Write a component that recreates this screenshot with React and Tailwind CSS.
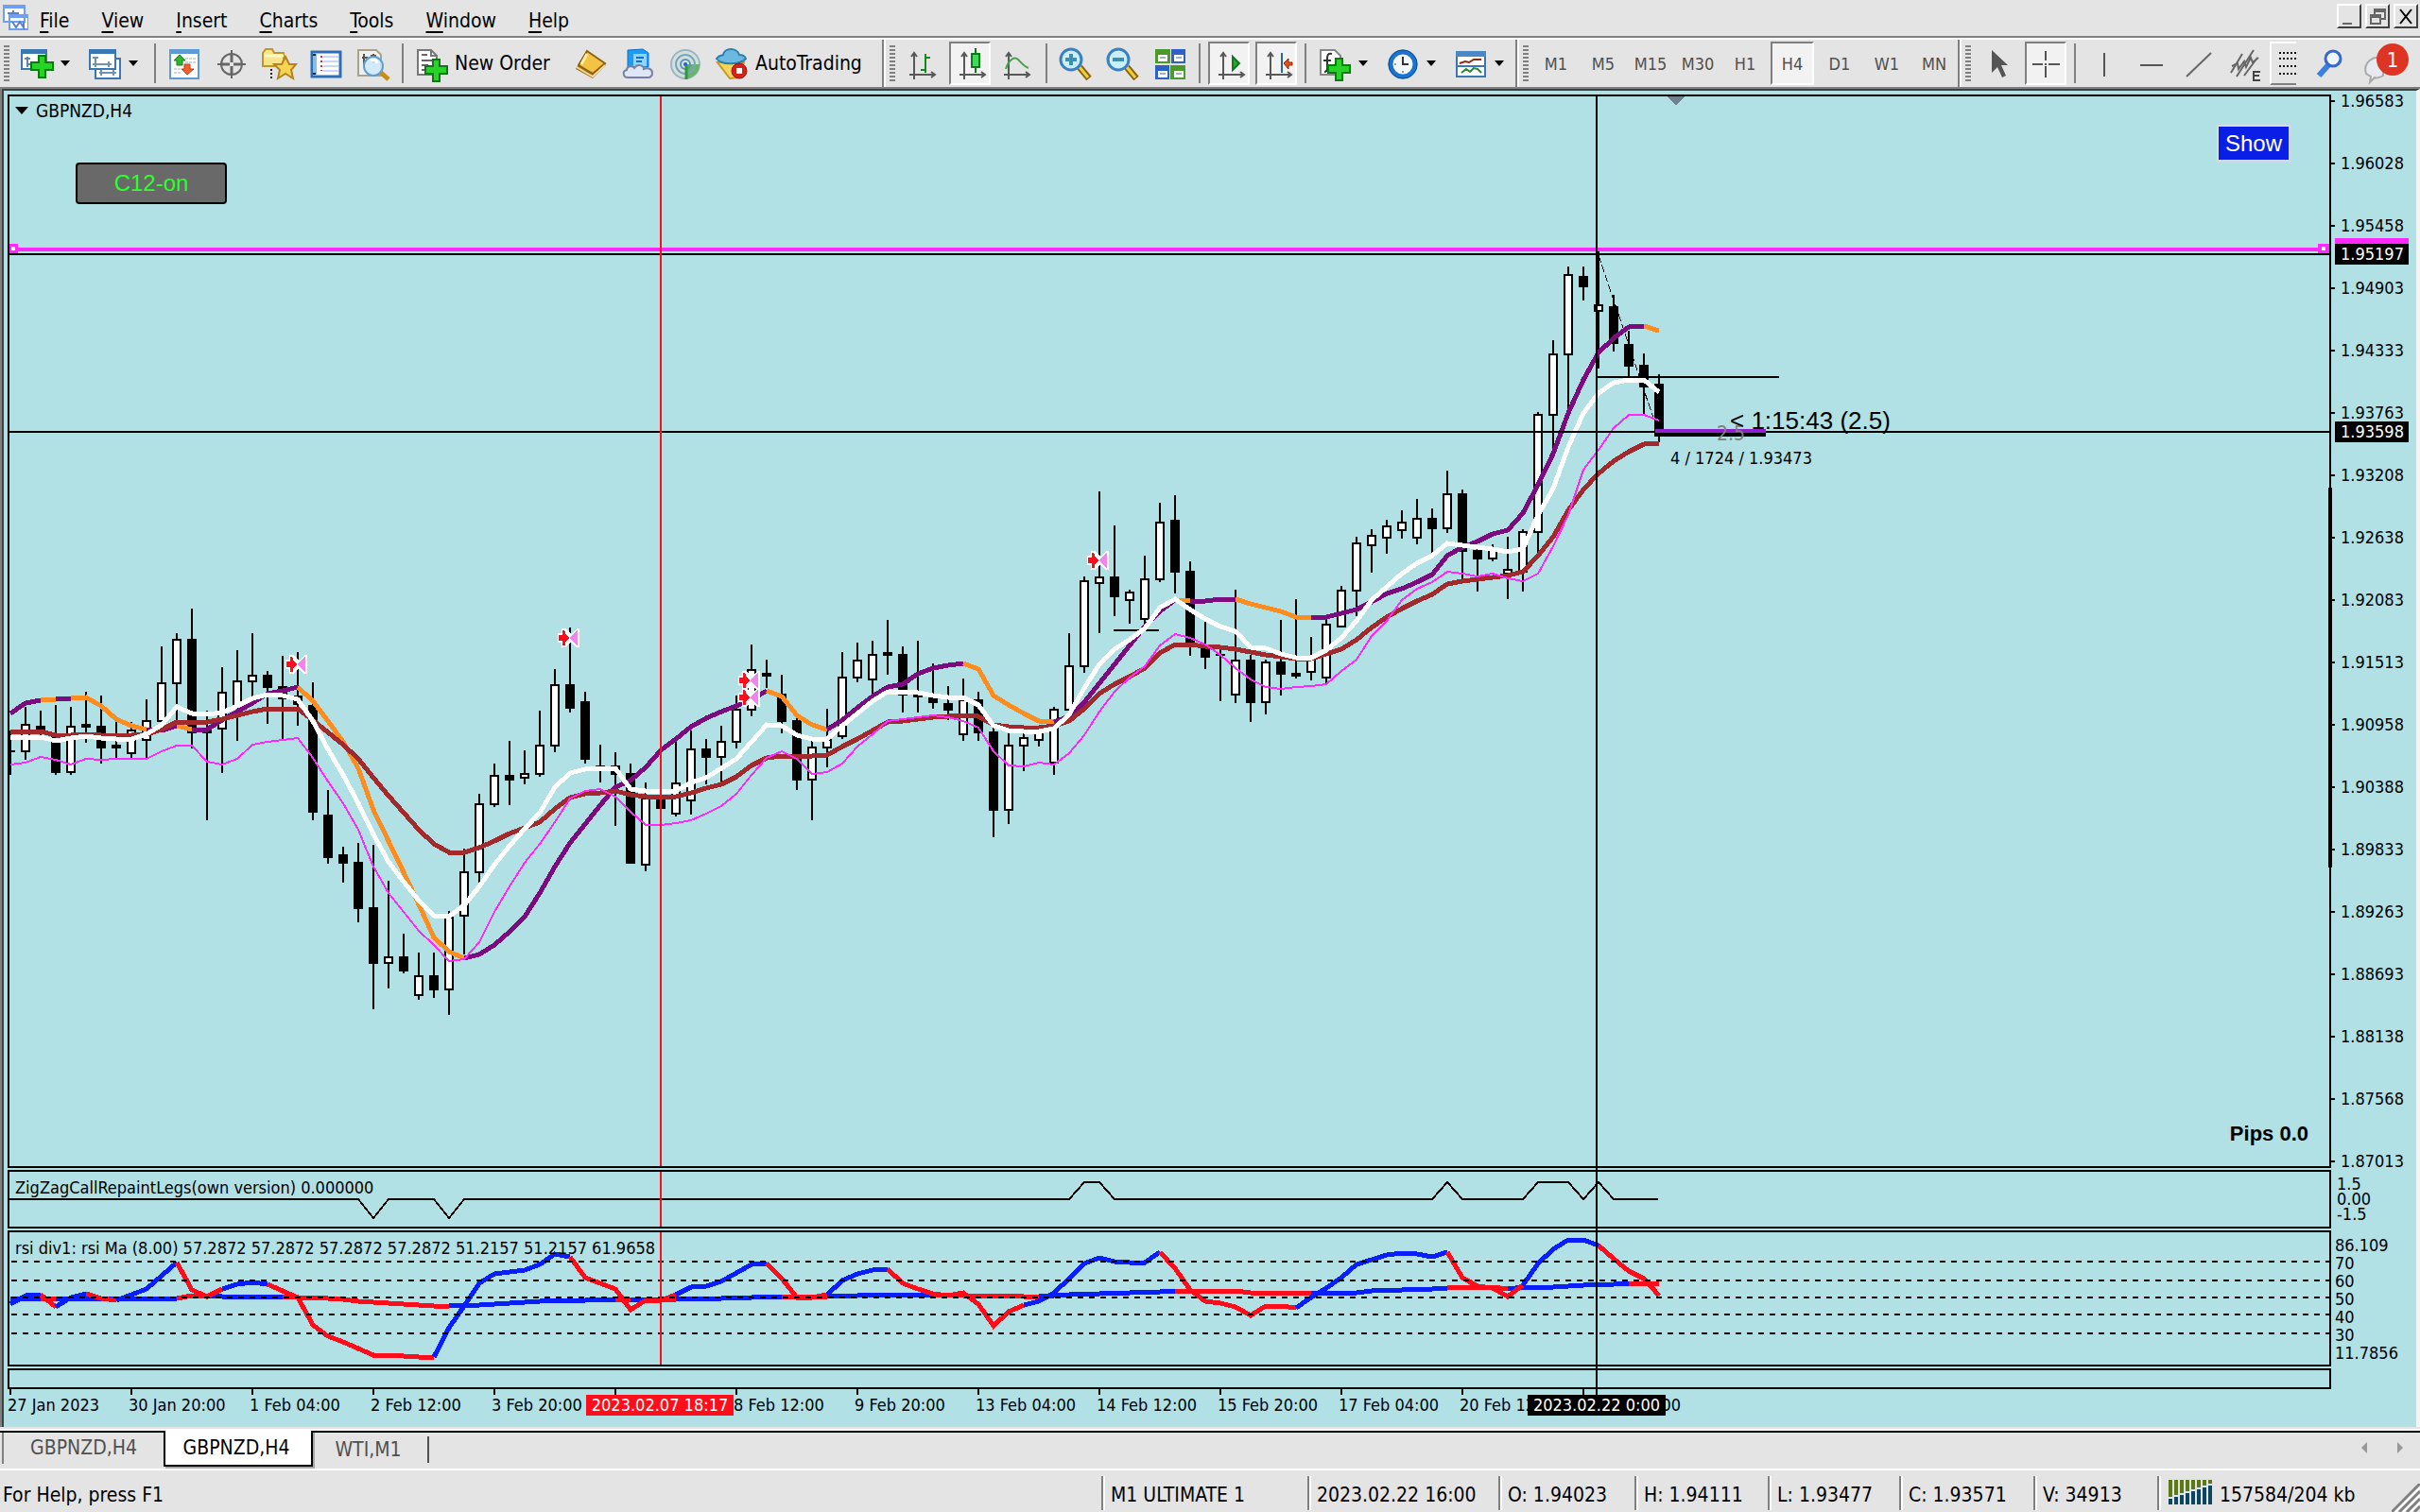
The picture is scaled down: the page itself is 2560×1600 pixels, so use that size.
import React, { useState } from 'react';

const menuItems = ['File', 'View', 'Insert', 'Charts', 'Tools', 'Window', 'Help'];
const timeframes = ['M1', 'M5', 'M15', 'M30', 'H1', 'H4', 'D1', 'W1', 'MN'];
const prices = ['1.96583', '1.96028', '1.95458', '1.94903', '1.94333', '1.93763', '1.93208', '1.92638', '1.92083', '1.91513', '1.90958', '1.90388', '1.89833', '1.89263', '1.88693', '1.88138', '1.87568', '1.87013'];
const dates = ['27 Jan 2023', '30 Jan 20:00', '1 Feb 04:00', '2 Feb 12:00', '3 Feb 20:00', '7 Feb 04:00', '8 Feb 12:00', '9 Feb 20:00', '13 Feb 04:00', '14 Feb 12:00', '15 Feb 20:00', '17 Feb 04:00', '20 Feb 12:00', '21 Feb 20:00'];
const rsiLevels = ['86.109', '70', '60', '50', '40', '30', '11.7856'];

// high, body top, body bottom, low, 1 = bull
const candles = [
  [773, 794, 796, 820, 0], [748, 766, 796, 804, 1], [752, 768, 775, 782, 0], [746, 776, 818, 820, 0], [748, 768, 818, 820, 1],
  [732, 766, 770, 786, 0], [736, 768, 792, 808, 0], [764, 788, 792, 802, 0], [764, 772, 798, 802, 1], [740, 762, 784, 802, 1],
  [684, 722, 764, 770, 1], [670, 676, 724, 764, 1], [644, 676, 776, 792, 0], [752, 772, 776, 868, 0], [706, 732, 772, 818, 1],
  [688, 720, 748, 784, 1], [670, 714, 722, 738, 1], [710, 714, 728, 766, 0], [694, 726, 740, 782, 0], [690, 736, 746, 768, 0],
  [722, 746, 860, 868, 0], [836, 862, 908, 914, 0], [896, 904, 914, 934, 0], [892, 912, 962, 976, 0], [894, 960, 1020, 1068, 0],
  [932, 1012, 1020, 1046, 1], [988, 1012, 1028, 1030, 0], [1008, 1032, 1054, 1058, 1], [1008, 1032, 1048, 1056, 0], [964, 970, 1048, 1074, 1],
  [898, 922, 970, 1010, 1], [840, 850, 924, 934, 1], [808, 820, 852, 854, 1], [784, 820, 826, 852, 0], [794, 818, 824, 830, 1],
  [752, 788, 820, 822, 1], [708, 724, 790, 796, 1], [664, 724, 750, 754, 0], [732, 742, 804, 808, 0], [788, 810, 812, 828, 0],
  [796, 810, 820, 874, 0], [808, 818, 914, 914, 0], [828, 844, 916, 922, 1], [830, 842, 856, 856, 0], [782, 828, 862, 864, 1],
  [773, 792, 848, 862, 1], [782, 792, 802, 830, 0], [768, 784, 802, 828, 1], [736, 750, 786, 792, 1], [682, 708, 752, 758, 1],
  [698, 712, 716, 728, 0], [714, 734, 764, 776, 0], [758, 762, 826, 836, 0], [784, 790, 826, 868, 1], [750, 782, 792, 812, 1],
  [690, 716, 780, 782, 1], [680, 698, 718, 722, 1], [678, 692, 720, 738, 1], [656, 690, 694, 714, 0], [684, 692, 736, 754, 0],
  [678, 735, 738, 754, 0], [702, 737, 744, 750, 0], [726, 744, 752, 762, 0], [718, 740, 778, 784, 1], [732, 740, 776, 784, 0],
  [770, 774, 858, 886, 0], [776, 788, 858, 872, 1], [775, 780, 790, 816, 1], [772, 774, 784, 790, 1], [748, 750, 808, 820, 1],
  [670, 704, 752, 754, 1], [610, 614, 706, 712, 1], [520, 610, 618, 670, 1], [556, 610, 632, 652, 0], [624, 626, 636, 660, 1],
  [588, 612, 656, 660, 1], [532, 552, 614, 616, 1], [524, 550, 606, 628, 0], [594, 604, 682, 694, 0], [658, 684, 696, 708, 0],
  [686, 692, 694, 742, 0], [624, 698, 736, 744, 1], [693, 698, 744, 764, 0], [698, 700, 744, 756, 1], [656, 700, 714, 736, 0],
  [634, 712, 716, 718, 0], [674, 697, 712, 720, 1], [655, 660, 718, 724, 1], [620, 624, 664, 664, 1], [568, 574, 626, 652, 1],
  [560, 566, 578, 606, 1], [550, 556, 570, 586, 1], [540, 552, 562, 570, 1], [528, 548, 570, 576, 1], [538, 548, 560, 586, 0],
  [498, 522, 560, 564, 1], [518, 522, 584, 614, 0], [577, 582, 592, 626, 0], [576, 581, 592, 594, 1], [568, 602, 608, 634, 1],
  [560, 562, 606, 626, 1], [436, 438, 564, 585, 1], [360, 374, 440, 474, 1], [282, 290, 376, 435, 1], [282, 292, 304, 318, 0],
  [266, 322, 330, 390, 1], [312, 324, 364, 372, 0], [350, 364, 388, 398, 0], [374, 386, 410, 438, 0], [396, 406, 462, 468, 0],
];

const slowMa = [775, 774, 774, 778, 778, 777, 778, 778, 778, 777, 772, 764, 764, 764, 761, 757, 753, 750, 750, 750, 762, 775, 788, 803, 823, 842, 860, 878, 893, 902, 902, 897, 890, 882, 876, 870, 856, 844, 840, 839, 837, 841, 843, 843, 843, 839, 834, 830, 822, 810, 802, 800, 800, 800, 799, 790, 782, 773, 764, 763, 761, 759, 758, 757, 758, 767, 769, 770, 770, 768, 763, 750, 734, 724, 716, 707, 691, 682, 682, 684, 685, 687, 690, 693, 695, 697, 697, 692, 687, 677, 664, 653, 644, 636, 629, 618, 615, 613, 611, 609, 605, 588, 568, 540, 518, 501, 488, 478, 470, 469];
const midMa = [780, 780, 780, 784, 781, 779, 781, 782, 782, 777, 767, 748, 755, 756, 754, 747, 739, 735, 736, 740, 763, 793, 820, 850, 883, 912, 933, 953, 969, 970, 958, 938, 915, 895, 877, 860, 833, 818, 814, 813, 813, 835, 837, 838, 837, 828, 823, 813, 803, 785, 767, 768, 778, 782, 782, 768, 755, 742, 732, 732, 733, 736, 738, 738, 746, 768, 773, 774, 774, 771, 756, 728, 703, 687, 677, 665, 643, 634, 645, 655, 663, 668, 685, 686, 692, 696, 696, 688, 675, 657, 635, 621, 607, 596, 588, 575, 577, 579, 581, 584, 581, 545, 517, 473, 437, 416, 405, 402, 402, 415];
const fastMa = [809, 807, 801, 804, 809, 803, 804, 803, 803, 803, 795, 789, 789, 806, 809, 803, 788, 785, 783, 781, 802, 827, 850, 878, 917, 945, 965, 985, 1000, 1017, 1015, 997, 965, 938, 913, 893, 870, 845, 837, 835, 843, 859, 873, 873, 871, 868, 861, 853, 840, 820, 802, 795, 803, 819, 817, 808, 790, 777, 763, 761, 759, 757, 759, 763, 770, 795, 810, 811, 807, 809, 797, 778, 753, 732, 717, 705, 683, 671, 675, 682, 693, 707, 719, 727, 729, 727, 726, 724, 710, 698, 673, 657, 635, 623, 616, 605, 607, 610, 607, 612, 615, 607, 578, 545, 497, 476, 453, 439, 439, 445];
const trendMa = [755, 744, 741, 740, 739, 738, 747, 761, 768, 772, 773, 768, 772, 772, 762, 753, 744, 734, 731, 727, 742, 763, 785, 813, 857, 890, 923, 957, 992, 1007, 1014, 1010, 1000, 986, 970, 945, 917, 892, 872, 852, 833, 826, 812, 794, 782, 769, 760, 753, 747, 740, 731, 737, 757, 767, 772, 762, 749, 737, 727, 724, 713, 707, 704, 702, 708, 736, 746, 755, 763, 764, 758, 743, 723, 703, 683, 663, 647, 635, 636, 636, 634, 634, 639, 643, 647, 653, 654, 653, 649, 645, 637, 628, 623, 616, 608, 588, 579, 573, 565, 561, 543, 513, 480, 437, 402, 373, 358, 346, 345, 350];
const rsi = [1380, 1371, 1370, 1383, 1373, 1369, 1374, 1376, 1370, 1364, 1350, 1336, 1365, 1372, 1364, 1359, 1357, 1359, 1366, 1373, 1402, 1414, 1420, 1427, 1434, 1434, 1435, 1436, 1436, 1405, 1382, 1358, 1348, 1346, 1344, 1338, 1327, 1330, 1352, 1358, 1364, 1386, 1376, 1376, 1370, 1362, 1361, 1356, 1347, 1338, 1337, 1353, 1373, 1373, 1370, 1355, 1348, 1344, 1343, 1358, 1364, 1369, 1371, 1368, 1380, 1403, 1388, 1381, 1377, 1368, 1353, 1337, 1331, 1335, 1336, 1336, 1325, 1342, 1365, 1377, 1379, 1383, 1392, 1382, 1382, 1384, 1373, 1363, 1352, 1338, 1333, 1328, 1326, 1327, 1330, 1325, 1352, 1361, 1363, 1372, 1360, 1337, 1322, 1312, 1312, 1318, 1332, 1345, 1353, 1371];
const zigzag = [[10, 1269], [379, 1269], [395, 1289], [411, 1269], [459, 1269], [475, 1289], [491, 1269], [1131, 1269], [1147, 1251], [1163, 1251], [1179, 1269], [1515, 1269], [1531, 1251], [1547, 1269], [1611, 1269], [1627, 1251], [1659, 1251], [1675, 1269], [1691, 1251], [1707, 1269], [1754, 1269]];
const rsiBase = [[0, 1374], [11, 1374], [11, 1371], [13, 1371], [13, 1372], [18, 1372], [20, 1373], [22, 1375], [24, 1378], [26, 1380], [28, 1382], [29, 1382], [32, 1380], [34, 1378], [36, 1376], [40, 1375], [41, 1375], [43, 1375], [46, 1374], [50, 1372], [52, 1372], [54, 1372], [57, 1370], [61, 1370], [65, 1371], [68, 1372], [70, 1370], [73, 1368], [77, 1366], [81, 1366], [82, 1368], [86, 1368], [89, 1368], [90, 1366], [93, 1364], [95, 1363], [96, 1362], [98, 1362], [99, 1364], [100, 1362], [102, 1362], [105, 1359], [107, 1358], [109, 1358]];

const trendRuns = [[0, 2, 'p'], [2, 3, 'o'], [3, 4, 'p'], [4, 9, 'o'], [9, 11, 'p'], [11, 12, 'o'], [12, 19, 'p'], [19, 30, 'o'], [30, 50, 'p'], [50, 54, 'o'], [54, 63, 'p'], [63, 69, 'o'], [69, 77, 'p'], [77, 78, 'o'], [78, 81, 'p'], [81, 86, 'o'], [86, 108, 'p'], [108, 109, 'o']];
const rsiRuns = [[0, 2, 'b'], [2, 3, 'r'], [3, 5, 'b'], [5, 7, 'r'], [7, 11, 'b'], [11, 14, 'r'], [14, 17, 'b'], [17, 28, 'r'], [28, 37, 'b'], [37, 44, 'r'], [44, 50, 'b'], [50, 54, 'r'], [54, 58, 'b'], [58, 67, 'r'], [67, 76, 'b'], [76, 85, 'r'], [85, 95, 'b'], [95, 100, 'r'], [100, 105, 'b'], [105, 109, 'r']];
const baseRuns = [[0, 2, 'b'], [2, 3, 'r'], [3, 11, 'b'], [11, 13, 'r'], [13, 18, 'b'], [18, 29, 'r'], [29, 40, 'b'], [40, 41, 'r'], [41, 43, 'b'], [43, 44, 'r'], [44, 51, 'b'], [51, 54, 'r'], [54, 61, 'b'], [61, 68, 'r'], [68, 77, 'b'], [77, 86, 'r'], [86, 95, 'b'], [95, 99, 'r'], [99, 107, 'b'], [107, 109, 'r']];
const colors = { p: '#7d0b80', o: '#ff8c1f', b: '#0a1fff', r: '#ff0d1b' };

const barX = (i) => 11 + 16 * i;
const toPoints = (arr, from = 0) => arr.map((y, i) => `${barX(from + i)},${y}`).join(' ');

// y of the rsi average at a given bar, straight between the listed bars
const baseAt = (i) => {
  for (let k = 1; k < rsiBase.length; k++) {
    const [x1, y1] = rsiBase[k - 1];
    const [x2, y2] = rsiBase[k];
    if (i <= x2 && x2 > x1) return y1 + ((y2 - y1) * (i - x1)) / (x2 - x1);
  }
  return rsiBase[rsiBase.length - 1][1];
};
const rsiAvg = candles.map((_, i) => Math.round(baseAt(i)));

function ColoredLine({ values, runs }) {
  return runs.map(([a, b, c]) => (
    <polyline key={a} points={toPoints(values.slice(a, b + 1), a)} fill="none" stroke={colors[c]} strokeWidth="5" />
  ));
}

function Icon({ children, size = 36 }) {
  return (
    <svg viewBox="0 0 36 36" width={size} height={size} className="shrink-0 overflow-visible" aria-hidden="true">
      {children}
    </svg>
  );
}

const Plus = ({ x = 12, y = 9 }) => (
  <path transform={`translate(${x} ${y})`} d="M8 1h7v7h8v8h-8v8H8v-8H0V8h8z" fill="#27d327" stroke="#0c7a12" strokeWidth="2" />
);
const Axes = ({ x = 9 }) => (
  <path transform={`translate(${x} 0)`} d="M0 7v28M-5 30h27M-3 11l3-4 3 4M18 27l4 3-4 3" fill="none" stroke="#585858" strokeWidth="2" />
);
const Lens = ({ minus }) => (
  <>
    <path d="M22 22l10 12" stroke="#8a6410" strokeWidth="7" />
    <path d="M22 22l9 11" stroke="#f0cf3c" strokeWidth="3" />
    <circle cx="13" cy="14" r="11" fill="#c9efff" stroke="#3c80c0" strokeWidth="3" />
    <path d={minus ? 'M7 14h12' : 'M7 14h12M13 8v12'} stroke="#3f8fb0" strokeWidth="4" />
  </>
);

const icons = {
  newChart: (
    <>
      <path d="M2 4h26v20H2z" fill="#fff" stroke="#3a78b4" strokeWidth="2" />
      <path d="M1 3h28v5H1z" fill="#3a78b4" />
      <path d="M8 11v11M5 13h6M8 19h8" stroke="#5f86a8" strokeWidth="2" />
      <Plus />
    </>
  ),
  profiles: (
    <>
      <path d="M8 13h26v21H8z" fill="#fff" stroke="#3a78b4" strokeWidth="2" />
      <path d="M12 28h18M14 25v6M27 25v6" stroke="#6f93b3" strokeWidth="2" />
      <path d="M2 4h27v20H2z" fill="#fff" stroke="#3a78b4" strokeWidth="2" />
      <path d="M1 3h29v5H1z" fill="#3a78b4" />
      <path d="M5 19h20M8 11v11M22 16v6M5 12h6" stroke="#6f93b3" strokeWidth="2" />
    </>
  ),
  market: (
    <>
      <path d="M3 4h30v30H3z" fill="#fff" stroke="#5d9bd5" strokeWidth="2" />
      <path d="M2 3h32v5H2z" fill="#5d9bd5" />
      <path d="M19 13h11M19 17h11M7 24h8M7 28h8" stroke="#d5d5d5" strokeWidth="2" strokeDasharray="3 1" />
      <path d="M13 9l6 6h-3v5h-6v-5H7z" fill="#2fb52f" stroke="#15801a" />
      <path d="M21 30l-6-6h3v-5h6v5h4z" fill="#f2602f" stroke="#c23a12" />
    </>
  ),
  target: (
    <>
      <circle cx="18" cy="19" r="11" fill="none" stroke="#666" strokeWidth="2" />
      <path d="M18 4v12M18 22v12M3 19h12M21 19h12" stroke="#666" strokeWidth="2" />
      <path d="M18 9v8M18 21v8M8 19h8M20 19h8" stroke="#666" strokeWidth="3" />
    </>
  ),
  favorites: (
    <>
      <path d="M1 7l3-4h7l2 4h10v14H1z" fill="#f6e488" stroke="#c09626" strokeWidth="2" />
      <path d="M3 10h20" stroke="#fff8c8" strokeWidth="3" />
      <path d="M10 24v12" stroke="#222" strokeWidth="2" strokeDasharray="2 2" />
      <path d="M25 11l4 8h7l-5 6 2 9-8-5-8 5 2-9-6-6h8z" fill="#f7d554" stroke="#b8821a" strokeWidth="2" />
    </>
  ),
  navigator: (
    <>
      <path d="M3 6h30v26H3z" fill="#fff" stroke="#2c6fb6" strokeWidth="3" />
      <path d="M4 7h4v24H4z" fill="#8fbbe0" />
      <path d="M15 11h16M15 16h16M15 21h16M15 26h16" stroke="#c9d4ff" strokeWidth="2" />
      <path d="M13 10v16" stroke="#f02020" strokeWidth="2" strokeDasharray="2 3" />
      <path d="M4 9h3M4 29h3" stroke="#222" strokeWidth="2" />
    </>
  ),
  tester: (
    <>
      <path d="M2 4h19l5 5v22H2z" fill="#f2f0ea" stroke="#a8a28e" strokeWidth="2" />
      <path d="M8 8v12M6 12h6M18 8v10M15 10h6" stroke="#555" strokeWidth="2" />
      <path d="M25 27l9 8" stroke="#c78d17" strokeWidth="5" />
      <circle cx="18" cy="21" r="10" fill="#cfeaf9" fillOpacity=".9" stroke="#5e9fd0" strokeWidth="2" />
      <path d="M15 15c3-2 7 0 7 3" fill="none" stroke="#fff" strokeWidth="3" />
    </>
  ),
  order: (
    <>
      <path d="M3 4h14l6 6v20H3z" fill="#fff" stroke="#777" strokeWidth="2" />
      <path d="M17 4v6h6" fill="none" stroke="#777" strokeWidth="2" />
      <path d="M7 9h6M7 15h12M7 20h7M7 25h5" stroke="#666" strokeWidth="2" />
      <Plus x={11} y={13} />
    </>
  ),
  gold: (
    <>
      <path d="M14 5l20 15-14 14L2 24z" fill="#a97416" />
      <path d="M14 5l19 13-13 11L5 20z" fill="#f3c444" stroke="#8f5f10" strokeWidth="2" />
      <path d="M14 8l-6 11" stroke="#fff0a8" strokeWidth="3" />
      <path d="M3 22l17 10 13-12" fill="none" stroke="#f0d9a0" strokeWidth="2" />
    </>
  ),
  cloud: (
    <>
      <path d="M7 4l16-1 6 4v15H7z" fill="#1e9af5" stroke="#1270c4" />
      <path d="M13 8h14v13H13z" fill="#8fd3ff" />
      <path d="M16 12h8M16 16h6" stroke="#1270c4" strokeWidth="2" />
      <path d="M7 33c-5 0-6-7-1-8 0-4 6-5 8-2 3-5 10-3 10 1 4-2 9 0 9 4s-2 5-5 5z" fill="#dfe6f5" stroke="#76819f" strokeWidth="2" />
    </>
  ),
  signals: (
    <>
      <circle cx="18" cy="19" r="15" fill="#d3e2d8" stroke="#9bb5c4" strokeWidth="2" />
      <path d="M18 19h15c0 8-6 15-15 15z" fill="#67b567" />
      <circle cx="18" cy="19" r="10" fill="none" stroke="#7ba4c4" strokeWidth="2" />
      <circle cx="18" cy="19" r="5" fill="none" stroke="#5f8fc0" strokeWidth="2" />
      <circle cx="18" cy="19" r="2" fill="#1a62c8" />
      <path d="M19 20v15" stroke="#2d9a35" strokeWidth="3" />
    </>
  ),
  auto: (
    <>
      <path d="M2 17h28l-7 16-8 1z" fill="#f5d65a" stroke="#c59a22" strokeWidth="2" />
      <path d="M1 13c3-4 6-3 7-4 1-8 15-8 17 0 3 0 6 1 7 4-5 6-25 8-31 0z" fill="#6bb8e0" stroke="#2a7fae" strokeWidth="2" />
      <circle cx="25" cy="26" r="8" fill="#d42418" stroke="#a01008" />
      <path d="M22 23h6v6h-6z" fill="#fff" />
    </>
  ),
  bars: (
    <>
      <Axes />
      <path d="M21 8v20M21 12h5M21 25h-5" stroke="#128a1a" strokeWidth="2" fill="none" />
    </>
  ),
  candle: (
    <>
      <Axes x={12} />
      <path d="M24 2v26" stroke="#0e7a16" strokeWidth="2" />
      <path d="M20 8h8v14h-8z" fill="#3bdc5a" stroke="#0e7a16" strokeWidth="2" />
    </>
  ),
  line: (
    <>
      <Axes />
      <path d="M6 24c4-12 10-13 13-10s7 8 11 9" stroke="#44a34c" strokeWidth="2" fill="none" />
    </>
  ),
  zoomIn: <Lens />,
  zoomOut: <Lens minus />,
  tile: (
    <>
      <path d="M2 3h16v15H2zM18 20h16v15H18z" fill="#4c9a2a" />
      <path d="M19 3h15v15H19zM2 20h15v15H2z" fill="#2c62c8" />
      <path d="M5 9h10v7H5zM22 9h10v7H22zM5 26h10v7H5zM22 26h10v7H22z" fill="#fff" />
      <path d="M7 12h6M24 12h6M7 29h6M24 29h6" stroke="#9db4c9" strokeWidth="2" />
    </>
  ),
  scroll: (
    <>
      <Axes x={12} />
      <path d="M22 11l7 7-7 7z" fill="#25a830" stroke="#117a1a" strokeWidth="2" />
    </>
  ),
  shift: (
    <>
      <Axes x={12} />
      <path d="M24 7v21" stroke="#1f6a96" strokeWidth="2" />
      <path d="M26 18l5-5v4h4v3h-4v4z" fill="#e8501a" stroke="#8c2a08" />
    </>
  ),
  indicators: (
    <>
      <path d="M3 4h15l6 6v20H3z" fill="#fff" stroke="#888" strokeWidth="2" />
      <path d="M15 8c-4-1-5 1-5 5v10c0 3-1 4-3 4M6 15h8" fill="none" stroke="#333" strokeWidth="2" />
      <Plus x={11} y={12} />
    </>
  ),
  clock: (
    <>
      <circle cx="18" cy="19" r="13" fill="#f2f6fa" stroke="#1b75cf" strokeWidth="5" />
      <circle cx="18" cy="19" r="15" fill="none" stroke="#0f4d94" />
      <path d="M18 11v8h6" fill="none" stroke="#333" strokeWidth="2" />
      <path d="M9 19h2M18 26v2" stroke="#999" strokeWidth="2" />
    </>
  ),
  template: (
    <>
      <path d="M3 6h30v26H3z" fill="#fff" stroke="#3a78b4" strokeWidth="2" />
      <path d="M2 5h32v6H2z" fill="#4a88c6" />
      <path d="M3 21h30" stroke="#3a78b4" strokeWidth="2" />
      <path d="M6 18l6-2 4 1 5-3h8" fill="none" stroke="#93270f" strokeWidth="2" />
      <path d="M8 28l5-4 4 3 4-4 4 1 4 4" fill="none" stroke="#2a8a30" strokeWidth="2" />
    </>
  ),
  cursor: <path d="M11 4v24l6-6 5 11 4-2-5-11h7z" fill="#555" />,
  cross: <path d="M18 5v10M18 21v12M4 19h11M21 19h12M17 19h2" stroke="#555" strokeWidth="2" fill="none" />,
  vline: <path d="M18 7v25" stroke="#555" strokeWidth="2" />,
  hline: <path d="M6 20h24" stroke="#555" strokeWidth="2" />,
  trend: <path d="M5 32L31 7" stroke="#666" strokeWidth="2" />,
  channel: (
    <>
      <path d="M2 28L14 8M8 32L26 4M16 31L30 12M3 21l6-3 1 6 6-8 2 6 5-10 2 5 6-5" stroke="#666" strokeWidth="2" fill="none" />
      <path d="M33 27h-7v9h7M26 31h6" stroke="#444" strokeWidth="2" fill="none" />
    </>
  ),
  search: (
    <>
      <path d="M16 20L6 31" stroke="#3d7fe0" strokeWidth="6" />
      <circle cx="21" cy="13" r="8" fill="#eef5ff" stroke="#3568c8" strokeWidth="3" />
    </>
  ),
};

function ToolButton({ name, label, pressed, menu, text }) {
  return (
    <button type="button" aria-label={label || text} aria-pressed={pressed} className="flex h-full shrink-0 items-center">
      <span className={pressed ? 'mx-[3px] flex h-[46px] w-[44px] items-center justify-center border-2 border-t-[#808080] border-l-[#808080] border-r-white border-b-white bg-[#f2f2f2]' : 'flex w-[50px] justify-center'}>
        <Icon>{icons[name]}</Icon>
      </span>
      {menu && (
        <svg viewBox="0 0 10 6" className="mr-3 h-[6px] w-[10px]" aria-hidden="true"><path d="M0 0h10L5 6z" /></svg>
      )}
      {text && <span className="-ml-px text-[21px] leading-6 whitespace-nowrap">{text}</span>}
    </button>
  );
}

const Separator = () => <span className="mx-[5px] h-[42px] w-[2px] shrink-0 bg-[#808080]" />;

function Grip() {
  return (
    <span className="mr-1 ml-1 flex h-[38px] w-[6px] shrink-0 flex-col justify-between">
      {[...Array(10)].map((_, i) => <i key={i} className="block h-[2px] bg-[#808080]" />)}
    </span>
  );
}

const GroupEnd = () => <span className="h-full w-[4px] shrink-0 border-r-2 border-l-2 border-l-[#808080] border-r-white" />;

function Toolbar() {
  const [frame, setFrame] = useState('H4');

  return (
    <div className="flex h-[52px] items-center overflow-hidden border-t-2 border-white">
      <Grip />
      <ToolButton name="newChart" label="New Chart" menu />
      <ToolButton name="profiles" label="Profiles" menu />
      <Separator />
      <ToolButton name="market" label="Market Watch" />
      <ToolButton name="target" label="Data Window" />
      <ToolButton name="favorites" label="Favorites" />
      <ToolButton name="navigator" label="Terminal" />
      <ToolButton name="tester" label="Strategy Tester" />
      <Separator />
      <span className="flex h-full w-[168px] shrink-0"><ToolButton name="order" text="New Order" /></span>
      <ToolButton name="gold" label="MetaEditor" />
      <ToolButton name="cloud" label="Cloud" />
      <ToolButton name="signals" label="Signals" />
      <span className="flex h-full w-[183px] shrink-0"><ToolButton name="auto" text="AutoTrading" /></span>
      <GroupEnd />
      <Grip />
      <ToolButton name="bars" label="Bar Chart" />
      <ToolButton name="candle" label="Candlesticks" pressed />
      <ToolButton name="line" label="Line Chart" />
      <Separator />
      <ToolButton name="zoomIn" label="Zoom In" />
      <ToolButton name="zoomOut" label="Zoom Out" />
      <ToolButton name="tile" label="Tile Windows" />
      <Separator />
      <ToolButton name="scroll" label="Auto Scroll" pressed />
      <ToolButton name="shift" label="Chart Shift" pressed />
      <Separator />
      <ToolButton name="indicators" label="Indicators" menu />
      <ToolButton name="clock" label="Periods" menu />
      <ToolButton name="template" label="Templates" menu />
      <GroupEnd />
      <Grip />
      {timeframes.map((tf) => (
        <button
          key={tf}
          type="button"
          onClick={() => setFrame(tf)}
          className={frame === tf
            ? 'mx-[2px] h-[46px] w-[46px] shrink-0 border-2 border-t-[#808080] border-l-[#808080] border-r-white border-b-white bg-[#f2f2f2] text-[18px] text-[#505050]'
            : 'h-[46px] w-[50px] shrink-0 text-[18px] text-[#505050]'}
        >{tf}</button>
      ))}
      <GroupEnd />
      <Grip />
      <ToolButton name="cursor" label="Cursor" />
      <ToolButton name="cross" label="Crosshair" pressed />
      <Separator />
      <ToolButton name="vline" label="Vertical Line" />
      <ToolButton name="hline" label="Horizontal Line" />
      <ToolButton name="trend" label="Trendline" />
      <ToolButton name="channel" label="Equidistant Channel" />
      <button type="button" aria-label="Fibonacci" className="h-[46px] w-[28px] shrink-0 border-t-2 border-b-2 border-l-2 border-white border-b-[#808080] pl-2">
        <svg viewBox="0 0 18 28" className="h-[28px] w-[18px]"><path d="M0 3h18M0 9h18M0 17h18M0 25h18" stroke="#111" strokeWidth="2" strokeDasharray="2 2" /></svg>
      </button>
      <span className="ml-auto flex h-full items-center gap-2 pr-[10px]">
        <ToolButton name="search" label="Search" />
        <button type="button" aria-label="Notifications" className="shrink-0">
          <svg viewBox="0 0 52 46" className="h-[46px] w-[52px]">
            <path d="M5 34c-4-12 8-20 18-16v18c-3 2-8 3-9 2l-5 5 1-6z" fill="#e9e9f2" stroke="#aaa" strokeWidth="2" />
            <circle cx="33" cy="19" r="17" fill="#de3423" />
            <text x="33" y="27" textAnchor="middle" fontSize="22" fill="#fff">1</text>
          </svg>
        </button>
      </span>
    </div>
  );
}

function MenuBar() {
  return (
    <header className="flex h-[40px] items-center border-b-2 border-[#808080] pl-[2px] text-[21px] leading-6">
      <svg viewBox="0 0 28 30" className="mb-1 h-[30px] w-[28px]" aria-hidden="true">
        <path d="M2 4h22v17H2zM8 14h20v15H8z" fill="#fff" stroke="#6f9ff0" strokeWidth="2" />
        <path d="M1 3h24v4H1zM7 13h21v4H7z" fill="#6f9ff0" />
        <path d="M6 12h12M12 9v4M11 21l4 6 4-6 4 6v-6" fill="none" stroke="#5a82c8" strokeWidth="2" />
      </svg>
      <nav className="mt-[6px] ml-[12px] flex gap-[34px]">
        {menuItems.map((item) => (
          <a key={item} href="#"><span className="underline decoration-2 underline-offset-4">{item[0]}</span>{item.slice(1)}</a>
        ))}
      </nav>
      <div className="mr-[2px] mb-1 ml-auto flex gap-1">
        {[['Minimize', 'M4 19h10'], ['Restore', 'M8 9V4h11v10h-4M4 10h10v9H4zM8 6h11M4 12h10'], ['Close', 'M5 4l12 15M17 4L5 19']].map(([label, d]) => (
          <button key={label} type="button" aria-label={label} className="h-[26px] w-[26px] border-2 border-white border-r-[#404040] border-b-[#404040]">
            <svg viewBox="0 0 22 22" className="h-[22px] w-[22px]"><path d={d} fill="none" stroke={label === 'Close' ? '#000' : '#666'} strokeWidth="2" /></svg>
          </button>
        ))}
      </div>
    </header>
  );
}

// closed order mark: red arrow in, violet arrow out
function Signal({ x, y }) {
  return (
    <g transform={`translate(${x} ${y})`}>
      <path d="M-11-5h4v-5h4l6 6 6-6h3v20h-3l-6-5-6 5h-4v-5h-4z" fill="#fff" />
      <path d="M-10-3h4v-5l3 1v3l4 4-4 4v4h-3v-5h-4z" fill="#ff0d1b" />
      <path d="M10-9v18L1 0z" fill="#f085ee" />
    </g>
  );
}

function Candles() {
  return candles.map(([hi, top, bottom, lo, up], i) => (
    <g key={i}>
      <path d={`M${barX(i)} ${hi}V${lo}`} stroke="#000" strokeWidth="2" />
      {up
        ? <rect x={barX(i) - 4} y={top + 1} width="8" height={bottom - top - 2} fill="#fff" stroke="#000" strokeWidth="2" />
        : <rect x={barX(i) - 5} y={top} width="10" height={bottom - top} />}
    </g>
  ));
}

function PriceChart() {
  return (
    <svg viewBox="10 102 2454 1132" preserveAspectRatio="none" className="min-h-0 w-full flex-1" shapeRendering="crispEdges">
      <Candles />
      <path d="M1178 667h48M1690 399h192" stroke="#000" strokeWidth="2" />
      <path d="M1690 266v124" stroke="#000" strokeWidth="4" />
      <rect x="1687" y="323" width="8" height="6" fill="#fff" stroke="#000" strokeWidth="2" />
      <path d="M1691 270L1755 460" stroke="#000" strokeWidth="1" strokeDasharray="8 3" />
      <ColoredLine values={trendMa} runs={trendRuns} />
      <polyline points={toPoints(slowMa)} fill="none" stroke="#a32a2c" strokeWidth="5" />
      <polyline points={toPoints(midMa)} fill="none" stroke="#fff" strokeWidth="5" />
      <polyline points={toPoints(fastMa)} fill="none" stroke="#ff28ff" strokeWidth="2" />
      <path d="M10 457h2454M10 269h2454" stroke="#000" strokeWidth="2" />
      <path d="M10 264h2454" stroke="#ff28ff" strokeWidth="4" />
      <path d="M10 258h9v10h-9zM2452 258h12v10h-12z" fill="#ff28ff" />
      <path d="M12 261h4v4h-4zM2456 261h4v4h-4z" fill="#fff" />
      <path d="M699 102v1132" stroke="#ff0d1b" strokeWidth="2" />
      <path d="M1764 102h18l-9 10z" fill="#708090" />
      <path d="M1751 460h117" stroke="#000" strokeWidth="4" />
      <path d="M1751 456h117" stroke="#8f20d0" strokeWidth="4" />
      <Signal x={313} y={703} />
      <Signal x={601} y={675} />
      <Signal x={792} y={720} />
      <Signal x={792} y={738} />
      <Signal x={1161} y={593} />
      <text x="1816" y="466" fontSize="21" fill="#808080">2.5</text>
      <text x="1830" y="454" fontSize="26" fontFamily="Liberation Sans, sans-serif">&lt; 1:15:43 (2.5)</text>
      <text x="1767" y="491" fontSize="18">4 / 1724 / 1.93473</text>
    </svg>
  );
}

function Pane({ className, children }) {
  return <div className={`relative ml-1 flex min-w-0 flex-1 flex-col border-2 border-black ${className}`}>{children}</div>;
}

function ChartWindow() {
  const [panel, setPanel] = useState(true);

  return (
    <main className="relative flex min-h-0 flex-1 flex-col border-t-2 border-r-4 border-l-2 border-t-[#404040] border-r-[#f4f4f4] border-l-[#404040] bg-[#b1e1e4] text-[18px] leading-[18px]">
      <div className="flex min-h-0 flex-1">
        <Pane className="mt-1 mb-[2px]">
          <PriceChart />
          <h1 className="absolute top-[6px] left-[6px] flex items-center gap-2 text-[19px]">
            <svg viewBox="0 0 14 8" className="h-[8px] w-[14px]" aria-hidden="true"><path d="M0 0h14L7 8z" /></svg>
            GBPNZD,H4
          </h1>
          <button type="button" onClick={() => setPanel(!panel)} className="absolute top-[70px] left-[70px] h-[44px] w-[160px] rounded-sm border-2 border-black bg-[#696969] font-['Liberation_Sans',sans-serif] text-[24px] text-[#2cff2c]">C12-on</button>
          <button type="button" className="absolute top-[30px] right-[41px] h-[39px] w-[78px] border-2 border-[#d8dde4] bg-[#0a1fe6] text-[24px] font-['Liberation_Sans',sans-serif] text-white">Show</button>
          <p className="absolute right-[22px] bottom-[22px] font-['Liberation_Sans',sans-serif] text-[22px] leading-6 font-bold">Pips 0.0</p>
        </Pane>
        <div className="relative flex w-[90px] flex-col justify-between pt-[2px]">
          {prices.map((p) => (
            <span key={p} className="flex h-[18px] items-center gap-[6px] before:h-[2px] before:w-1 before:bg-black">{p}</span>
          ))}
          <span className="absolute top-[156px] left-1 h-[22px] w-[78px] bg-[#ff28ff]" />
          <span className="absolute top-[162px] left-1 h-[22px] w-[78px] bg-black pl-[6px] leading-[22px] text-white">1.95197</span>
          <span className="absolute top-[350px] left-1 h-[22px] w-[78px] bg-black pl-[6px] leading-[22px] text-white">1.93598</span>
          <span className="absolute top-[420px] -left-[3px] h-[402px] w-1 bg-black" />
        </div>
      </div>

      <div className="flex h-[64px] shrink-0">
        <Pane className="mb-[2px]">
          <svg viewBox="10 1240 2454 58" preserveAspectRatio="none" className="min-h-0 w-full flex-1" shapeRendering="crispEdges">
            <polyline points={zigzag.map((p) => p.join(',')).join(' ')} fill="none" stroke="#000" strokeWidth="2" />
            <path d="M699 1240v58" stroke="#ff0d1b" strokeWidth="2" />
          </svg>
          <p className="absolute top-[8px] left-[6px]">ZigZagCallRepaintLegs(own version) 0.000000</p>
        </Pane>
        <div className="mb-[2px] flex w-[90px] flex-col justify-center pl-[6px] leading-4">
          <span>1.5</span>
          <span>0.00</span>
          <span>-1.5</span>
        </div>
      </div>

      <div className="flex h-[146px] shrink-0">
        <Pane className="mb-[2px]">
          <svg viewBox="10 1304 2454 140" preserveAspectRatio="none" className="min-h-0 w-full flex-1" shapeRendering="crispEdges">
            <ColoredLine values={rsiAvg} runs={baseRuns} />
            <ColoredLine values={rsi} runs={rsiRuns} />
            <path d="M12 1335h2452M12 1355h2452M12 1373h2452M12 1391h2452M12 1411h2452" stroke="#000" strokeWidth="2" strokeDasharray="6 6" />
            <path d="M699 1304v140" stroke="#ff0d1b" strokeWidth="2" />
          </svg>
          <p className="absolute top-[8px] left-[6px]">rsi div1: rsi Ma (8.00) 57.2872 57.2872 57.2872 57.2872 51.2157 51.2157 61.9658</p>
        </Pane>
        <div className="mb-[2px] flex w-[90px] flex-col justify-center pl-1 leading-[19px]">
          {rsiLevels.map((l) => <span key={l}>{l}</span>)}
        </div>
      </div>

      <div className="flex h-[22px] shrink-0">
        <Pane className="" />
        <div className="w-[90px]" />
      </div>

      <div className="relative flex h-[40px] shrink-0 overflow-hidden pl-1 leading-[22px]">
        {dates.map((d) => (
          <span key={d} className="w-[128px] shrink-0 whitespace-nowrap before:ml-[2px] before:block before:h-[6px] before:w-[2px] before:bg-black">{d}</span>
        ))}
        <span className="absolute top-[6px] left-[616px] w-[156px] bg-[#ff0d1b] text-center text-white">2023.02.07 18:17</span>
        <span className="absolute top-[6px] left-[1612px] w-[146px] bg-black text-center text-white">2023.02.22 0:00</span>
      </div>
      <span className="absolute top-[6px] bottom-[12px] left-[1684px] w-[2px] bg-black" />
    </main>
  );
}

function TabBar() {
  return (
    <div className="mt-[2px] flex h-[42px] shrink-0 items-start border-t-2 border-white text-[21px] leading-[33px] text-[#505050]">
      <div className="flex h-full w-full items-start border-t-2 border-black">
        <button type="button" className="ml-[2px] w-[171px] border-l-2 border-[#808080] text-center">GBPNZD,H4</button>
        <button type="button" className="-mt-[2px] h-[38px] w-[158px] border-2 border-t-0 border-black bg-white pr-1 text-black shadow-[2px_2px_#a8a8a8]">GBPNZD,H4</button>
        <button type="button" className="mt-1 h-[28px] w-[123px] border-r-2 border-[#505050] pr-1 leading-[25px]">WTI,M1</button>
        <span className="mt-[10px] mr-[18px] ml-auto flex gap-8">
          <button type="button" aria-label="Scroll tabs left"><svg viewBox="0 0 6 12" className="h-3 w-[6px]"><path d="M6 0v12L0 6z" fill="#999" /></svg></button>
          <button type="button" aria-label="Scroll tabs right"><svg viewBox="0 0 6 12" className="h-3 w-[6px]"><path d="M0 0v12l6-6z" fill="#999" /></svg></button>
        </span>
      </div>
    </div>
  );
}

function StatusBar() {
  const cell = 'h-[36px] shrink-0 border-l-2 border-[#808080] pl-[8px] leading-[40px] shadow-[inset_2px_0_#fff]';
  return (
    <footer className="flex h-[46px] shrink-0 items-center border-t-2 border-white pt-1 pl-[3px] text-[21px] whitespace-nowrap">
      <span className="h-[36px] min-w-0 flex-1 leading-[40px]">For Help, press F1</span>
      <span className={`w-[218px] ${cell}`}>M1 ULTIMATE 1</span>
      <span className={`w-[202px] ${cell}`}>2023.02.22 16:00</span>
      <span className={`w-[144px] ${cell}`}>O: 1.94023</span>
      <span className={`w-[141px] ${cell}`}>H: 1.94111</span>
      <span className={`w-[139px] ${cell}`}>L: 1.93477</span>
      <span className={`w-[142px] ${cell}`}>C: 1.93571</span>
      <span className={`w-[131px] ${cell}`}>V: 34913</span>
      <span className={`flex w-[278px] items-start gap-2 ${cell}`}>
        <svg viewBox="0 0 46 26" className="mt-1 ml-[2px] h-[26px] w-[46px]" aria-hidden="true">
          {[0, 1, 2, 3, 4, 5, 6, 7].map((i) => (
            <g key={i}>
              <path d={`M${2 + i * 6} 0V${18 - i * 2}`} stroke="#5c7a12" strokeWidth="4" />
              <path d={`M${2 + i * 6} ${20 - i * 2}V26`} stroke="#0b4560" strokeWidth="4" />
            </g>
          ))}
        </svg>
        157584/204 kb
        <svg viewBox="0 0 30 30" className="mt-2 ml-auto h-[30px] w-[30px]" aria-hidden="true">
          <path d="M0 30L30 0M8 30L30 8M16 30l14-14M24 30l6-6" stroke="#808080" strokeWidth="3" />
          <path d="M4 30L30 4M12 30l18-18M20 30l10-10" stroke="#fff" strokeWidth="2" />
        </svg>
      </span>
    </footer>
  );
}

function App() {
  return (
    <div className="flex h-screen flex-col overflow-hidden bg-[#e4e4e4] font-['DejaVu_Sans_Condensed','Noto_Sans',sans-serif] text-black">
      <MenuBar />
      <Toolbar />
      <div className="flex min-h-0 flex-1 flex-col border-t-2 border-l-2 border-[#808080]">
        <ChartWindow />
      </div>
      <TabBar />
      <StatusBar />
    </div>
  );
}

export default App;
